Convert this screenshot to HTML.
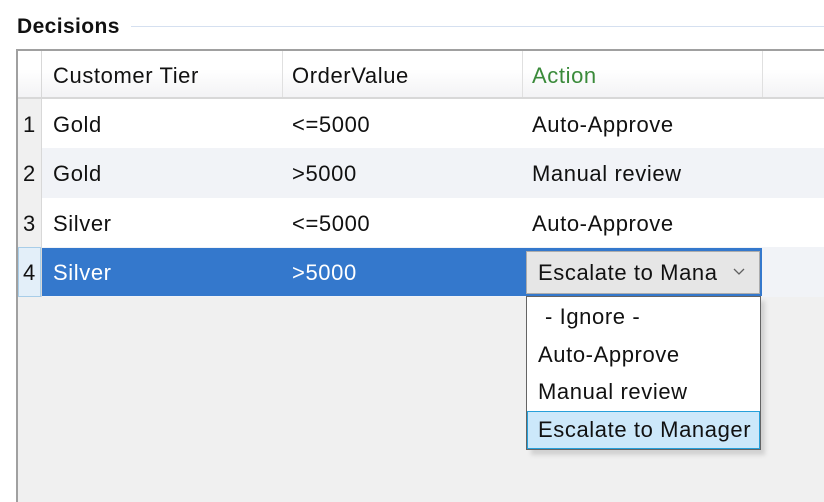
<!DOCTYPE html>
<html><head><style>
body{margin:0;width:824px;height:500px;background:#fff;font-family:"Liberation Sans",sans-serif;position:relative;overflow:hidden;color:#111}
.a{position:absolute}
.t{font-size:22px;line-height:22px;letter-spacing:0.6px;white-space:nowrap}
</style></head><body>
<div class="a t" style="left:17px;top:16px;font-weight:bold;font-size:21px;letter-spacing:0.4px">Decisions</div>
<div class="a" style="left:131px;top:26px;width:693px;height:1px;background:#d5e0f0"></div>
<!-- grid -->
<div class="a" style="left:16px;top:49px;width:808px;height:451px;background:#f0f0f0;border-left:2px solid #a0a0a0;border-top:2px solid #a0a0a0"></div>
<!-- header -->
<div class="a" style="left:18px;top:51px;width:806px;height:46px;background:linear-gradient(#fff 40%,#f3f3f5)"></div>
<div class="a" style="left:18px;top:97px;width:806px;height:2px;background:#d8d8d8"></div>
<div class="a" style="left:41px;top:51px;width:1px;height:246px;background:#d8d8d8"></div>
<div class="a" style="left:282px;top:51px;width:1px;height:46px;background:#e0e0e0"></div>
<div class="a" style="left:522px;top:51px;width:1px;height:46px;background:#e0e0e0"></div>
<div class="a" style="left:762px;top:51px;width:1px;height:46px;background:#e0e0e0"></div>
<div class="a t" style="left:53px;top:65px">Customer Tier</div>
<div class="a t" style="left:292px;top:65px">OrderValue</div>
<div class="a t" style="left:532px;top:65px;color:#3a8a3a">Action</div>
<!-- rows -->
<div class="a" style="left:18px;top:99px;width:23px;height:198px;background:#f0f0f0"></div>
<div class="a" style="left:42px;top:99px;width:782px;height:49px;background:#fff"></div>
<div class="a" style="left:42px;top:148px;width:782px;height:50px;background:#f1f3f7"></div>
<div class="a" style="left:42px;top:198px;width:782px;height:49px;background:#fff"></div>
<div class="a" style="left:42px;top:247px;width:782px;height:50px;background:#f1f3f7"></div>
<div class="a" style="left:18px;top:247px;width:23px;height:50px;background:#e3eff9;border:1px solid #a8cde8;box-sizing:border-box"></div>
<div class="a" style="left:42px;top:248px;width:480px;height:48px;background:#3478cc"></div>
<div class="a" style="left:522px;top:248px;width:240px;height:48px;background:#3478cc"></div>
<div class="a t" style="left:23px;top:114px">1</div>
<div class="a t" style="left:23px;top:163px">2</div>
<div class="a t" style="left:23px;top:213px">3</div>
<div class="a t" style="left:23px;top:262px">4</div>
<div class="a t" style="left:53px;top:114px">Gold</div>
<div class="a t" style="left:53px;top:163px">Gold</div>
<div class="a t" style="left:53px;top:213px">Silver</div>
<div class="a t" style="left:53px;top:262px;color:#fff">Silver</div>
<div class="a t" style="left:292px;top:114px">&lt;=5000</div>
<div class="a t" style="left:292px;top:163px">&gt;5000</div>
<div class="a t" style="left:292px;top:213px">&lt;=5000</div>
<div class="a t" style="left:292px;top:262px;color:#fff">&gt;5000</div>
<div class="a t" style="left:532px;top:114px">Auto-Approve</div>
<div class="a t" style="left:532px;top:163px">Manual review</div>
<div class="a t" style="left:532px;top:213px">Auto-Approve</div>
<!-- combo -->
<div class="a" style="left:526px;top:251px;width:234px;height:43px;background:#e6e6e6;border:1px solid #acacac;box-sizing:border-box"></div>
<div class="a t" style="left:538px;top:262px;width:180px;overflow:hidden">Escalate to Mana</div>
<svg class="a" style="left:733px;top:268px" width="12" height="8"><path d="M1 1 L6 6 L11 1" fill="none" stroke="#606060" stroke-width="1.3"/></svg>
<!-- dropdown -->
<div class="a" style="left:531px;top:301px;width:234px;height:154px;background:#999;opacity:.35;filter:blur(2px)"></div>
<div class="a" style="left:526px;top:296px;width:235px;height:154px;background:#fff;border:1px solid #646464;box-sizing:border-box"></div>
<div class="a t" style="left:545px;top:306px">- Ignore -</div>
<div class="a t" style="left:538px;top:344px">Auto-Approve</div>
<div class="a t" style="left:538px;top:381px">Manual review</div>
<div class="a" style="left:527px;top:411px;width:233px;height:38px;background:#cce8fa;border:1px solid #26a0da;box-sizing:border-box"></div>
<div class="a t" style="left:538px;top:419px">Escalate to Manager</div>
</body></html>
